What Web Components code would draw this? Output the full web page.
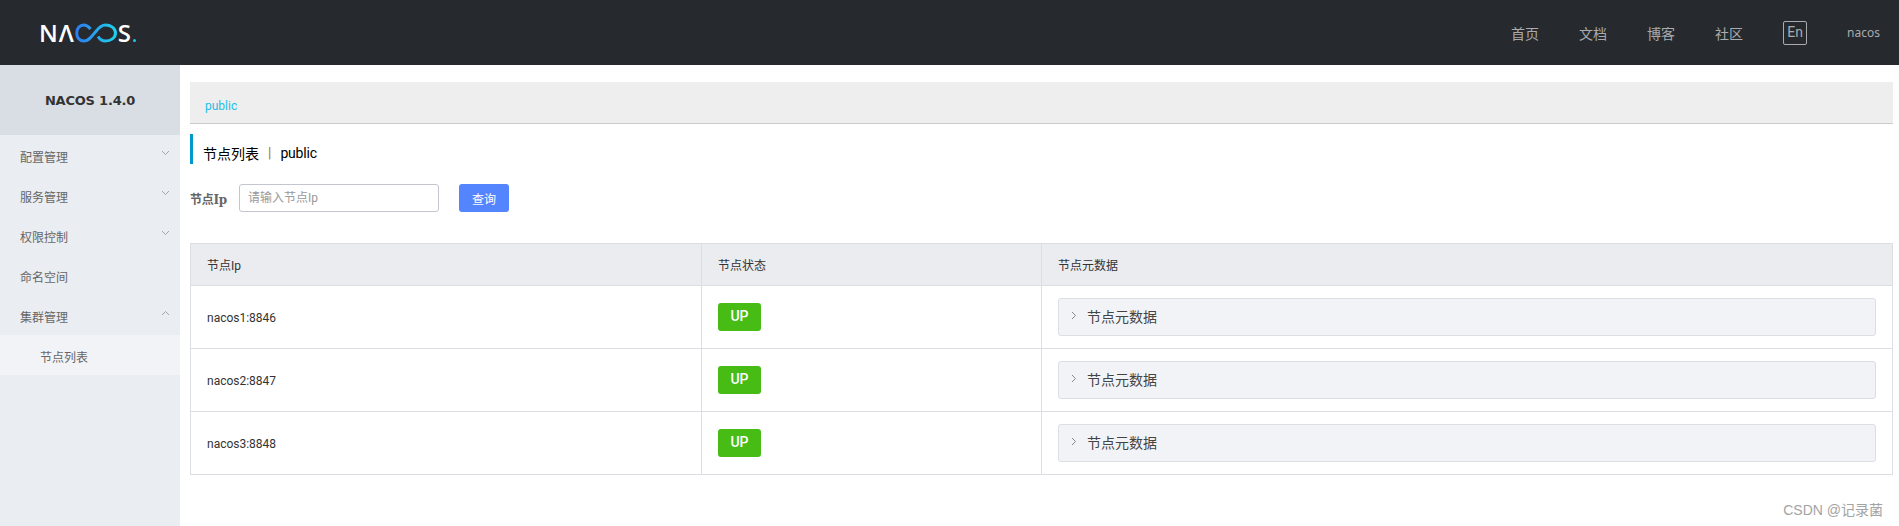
<!DOCTYPE html>
<html lang="zh">
<head>
<meta charset="utf-8">
<title>Nacos</title>
<style>
    html, body { margin: 0; height: 100%; overflow: hidden; background: #fff; }
    body { font-family: "Roboto", "Noto Sans CJK SC", sans-serif; font-size: 12px; color: #333; }
</style>
</head>
<body>
<nacos-app>
    <nacos-header slot="header"></nacos-header>
    <nacos-sidebar slot="sidebar" title="NACOS 1.4.0">
        <side-item arrow="down">配置管理</side-item>
        <side-item arrow="down">服务管理</side-item>
        <side-item arrow="down">权限控制</side-item>
        <side-item>命名空间</side-item>
        <side-item arrow="up">集群管理</side-item>
        <side-item sub>节点列表</side-item>
    </nacos-sidebar>
    <bread-crumb>public</bread-crumb>
    <page-title name="节点列表" ns="public"></page-title>
    <search-form></search-form>
    <node-table>
        <node-row ip="nacos1:8846"></node-row>
        <node-row ip="nacos2:8847"></node-row>
        <node-row ip="nacos3:8848"></node-row>
    </node-table>
</nacos-app>

<script>
// 공통: 클래스에서 shadow root 만들고 템플릿 문자열 넣기
function shadow(el, html) {
    el.attachShadow({ mode: 'open' });
    el.shadowRoot.innerHTML = html;
}

class NacosApp extends HTMLElement {
    constructor() {
        super();
        shadow(this, `
            <style>
            :host { display: flex; flex-direction: column; height: 526px; position: relative; }
            .body { display: flex; flex: 1; min-height: 0; }
            main { flex: 1; min-width: 0; padding: 17px 6px 0 10px; }
            .mark {
                position: absolute;
                right: 16px;
                bottom: 7px;
                font-family: "Liberation Sans", "Noto Sans CJK SC", sans-serif;
                font-size: 14px;
                line-height: 18px;
                color: #a3a3a3;
            }
            </style>
            <slot name="header"></slot>
            <div class="body">
                <slot name="sidebar"></slot>
                <main><slot></slot></main>
            </div>
            <div class="mark">CSDN @记录菌</div>
        `);
    }
}

class NacosHeader extends HTMLElement {
    constructor() {
        super();
        shadow(this, `
            <style>
            :host { display: flex; align-items: center; height: 65px; background: #262a2f; color: #a9abad; }
            .logo { display: flex; align-items: center; margin-left: 39px; color: #fff; font: 600 24px/24px "Open Sans", sans-serif; }
            .logo .na { letter-spacing: 1px; }
            .logo svg { display: block; }
            .logo i { font-style: normal; width: 3px; height: 3px; border-radius: 50%; background: #1fc6e8; align-self: flex-end; margin: 0 0 3px 2px; }
            nav { display: flex; align-items: center; gap: 40px; margin-left: auto; padding-right: 19px; font-size: 14px; font-family: "Noto Sans CJK SC", sans-serif; }
            .lang { box-sizing: border-box; width: 24px; height: 24px; border: 1px solid #a9abad; border-radius: 2px; text-align: center; font: 14px/20px "Roboto", sans-serif; }
            .user { font: 12px "Noto Sans", sans-serif; }
            </style>
            <div class="logo">
                <span class="na">NΛ</span>
                <svg width="43" height="20" viewBox="0 0 43 20" fill="none">
                    <defs>
                        <linearGradient id="inf" x1="0" x2="1" y1="0" y2="0">
                            <stop offset="0" stop-color="#2f7cf0"/>
                            <stop offset="1" stop-color="#1fd0ea"/>
                        </linearGradient>
                    </defs>
                    <path d="M15.500 6C13.500 3.500 11.500 2 8.800 2 4.600 2 1.700 5.600 1.700 10s2.900 8 7.100 8c5.500 0 8-5 12-9.500C23.500 5 26 2 30.500 2c5 0 10 3 10 8s-5 8-10 8c-3.300 0-5.800-1.800-7.500-4.500" stroke="url(#inf)" stroke-width="3"/>
                </svg>
                <span>S</span><i></i>
            </div>
            <nav>
                <span>首页</span>
                <span>文档</span>
                <span>博客</span>
                <span>社区</span>
                <span class="lang">En</span>
                <span class="user">nacos</span>
            </nav>
        `);
    }
}

class NacosSidebar extends HTMLElement {
    constructor() {
        super();
        shadow(this, `
            <style>
            :host { display: block; width: 180px; height: 100%; background: #eaedf1; flex: none; }
            .title {
                height: 70px;
                display: flex;
                align-items: center;
                justify-content: center;
                background: #d9dee5;
                color: #333;
                font: bold 13px "DejaVu Sans", sans-serif;
                letter-spacing: -0.2px;
            }
            </style>
            <div class="title"></div>
            <slot></slot>
        `);
        this.shadowRoot.querySelector('.title').textContent = this.getAttribute('title');
    }
}

class SideItem extends HTMLElement {
    constructor() {
        super();
        const arrow = this.getAttribute('arrow');
        const d = arrow === 'up' ? 'M1 5 L4.500 1.500 L8 5' : 'M1 1 L4.500 4.500 L8 1';
        shadow(this, `
            <style>
            :host { display: flex; align-items: center; justify-content: space-between; box-sizing: border-box; height: 40px; padding: 2px 10px 0 20px; color: #666; font-family: "Noto Sans CJK SC", sans-serif; }
            :host([sub]) { padding-left: 40px; background: #f2f3f7; }
            svg { margin-top: -7px; display: block; }
            </style>
            <slot></slot>
            ${arrow ? `<svg width="9" height="6" viewBox="0 0 9 6" fill="none" stroke="#a2a6ac"><path d="${d}"/></svg>` : ''}
        `);
    }
}

class BreadCrumb extends HTMLElement {
    constructor() {
        super();
        shadow(this, `
            <style>
            :host { display: flex; align-items: center; box-sizing: border-box; height: 42px; padding: 7px 0 0 15px; background: #eee; border-bottom: 1px solid #ccc; color: #1fc0e6; font-size: 12px; }
            </style>
            <slot></slot>
        `);
    }
}

class PageTitle extends HTMLElement {
    constructor() {
        super();
        shadow(this, `
            <style>
            :host { display: flex; align-items: center; box-sizing: border-box; height: 30px; margin-top: 10px; border-left: 3px solid #09c; padding: 8px 0 0 10px; color: #000; font-size: 14px; }
            .name { font-family: "Noto Sans CJK SC", sans-serif; }
            .sep { color: #b0740a; margin: 0 9px; font-size: 14px; }
            .ns { letter-spacing: -0.2px; }
            </style>
            <span class="name"></span><span class="sep">|</span><span class="ns"></span>
        `);
        this.shadowRoot.querySelector('.name').textContent = this.getAttribute('name');
        this.shadowRoot.querySelector('.ns').textContent = this.getAttribute('ns');
    }
}

class SearchForm extends HTMLElement {
    constructor() {
        super();
        shadow(this, `
            <style>
            :host { display: flex; align-items: center; height: 28px; margin: 20px 0 31px; font-size: 12px; }
            label { width: 49px; font: bold 12px "DejaVu Serif", "Noto Sans CJK SC", serif; color: #666; letter-spacing: -0.3px; }
            input {
                box-sizing: border-box;
                width: 200px;
                height: 28px;
                padding: 0 8px;
                border: 1px solid #c4c6cf;
                border-radius: 3px;
                font: 12px "Roboto", "Noto Sans CJK SC", sans-serif;
                outline: none;
            }
            input::placeholder { color: #999; }
            button {
                width: 50px;
                height: 28px;
                margin-left: 20px;
                border: 0;
                border-radius: 3px;
                background: #5584ff;
                color: #fff;
                font: 12px "Noto Sans CJK SC", sans-serif;
                padding: 0;
            }
            </style>
            <label>节点Ip</label>
            <input placeholder="请输入节点Ip">
            <button>查询</button>
        `);
    }
}

class NodeTable extends HTMLElement {
    constructor() {
        super();
        shadow(this, `
            <style>
            :host { display: block; border: solid #dcdee3; border-width: 1px 1px 0; color: #333; font-size: 12px; }
            .head { display: grid; grid-template-columns: 511px 340px 1fr; height: 42px; box-sizing: border-box; background: #ebecf0; border-bottom: 1px solid #dcdee3; }
            .head div { display: flex; align-items: center; padding-left: 16px; border-right: 1px solid #dcdee3; }
            .head div:last-child { border-right: 0; }
            </style>
            <div class="head">
                <div>节点Ip</div>
                <div>节点状态</div>
                <div>节点元数据</div>
            </div>
            <slot></slot>
        `);
    }
}

class NodeRow extends HTMLElement {
    constructor() {
        super();
        shadow(this, `
            <style>
            :host { display: grid; grid-template-columns: 511px 340px 1fr; height: 63px; box-sizing: border-box; border-bottom: 1px solid #dcdee3; }
            .cell { display: flex; align-items: center; padding: 0 16px; border-right: 1px solid #dcdee3; }
            .cell:last-child { border-right: 0; }
            .ip { padding-top: 2px; }
            .badge { width: 43px; height: 28px; text-align: center; border-radius: 3px; background: #46bc15; color: #fff; font: 500 14px/27px "Roboto", sans-serif; }
            .meta {
                flex: 1;
                box-sizing: border-box;
                height: 38px;
                display: flex;
                align-items: center;
                gap: 10px;
                padding: 0 0 2px 12px;
                background: #f2f3f7;
                border: 1px solid #dcdee3;
                border-radius: 3px;
                font-size: 14px;
                font-family: "Noto Sans CJK SC", sans-serif;
                color: #444;
            }
            svg { display: block; margin-top: -2px; }
            </style>
            <div class="cell ip"></div>
            <div class="cell"><span class="badge">UP</span></div>
            <div class="cell">
                <div class="meta">
                    <svg width="6" height="9" viewBox="0 0 6 9" fill="none" stroke="#85888d"><path d="M1 1 L4.500 4.500 L1 8"/></svg>
                    节点元数据
                </div>
            </div>
        `);
        this.shadowRoot.querySelector('.ip').textContent = this.getAttribute('ip');
    }
}

customElements.define('nacos-app', NacosApp);
customElements.define('nacos-header', NacosHeader);
customElements.define('nacos-sidebar', NacosSidebar);
customElements.define('side-item', SideItem);
customElements.define('bread-crumb', BreadCrumb);
customElements.define('page-title', PageTitle);
customElements.define('search-form', SearchForm);
customElements.define('node-table', NodeTable);
customElements.define('node-row', NodeRow);
</script>
</body>
</html>
